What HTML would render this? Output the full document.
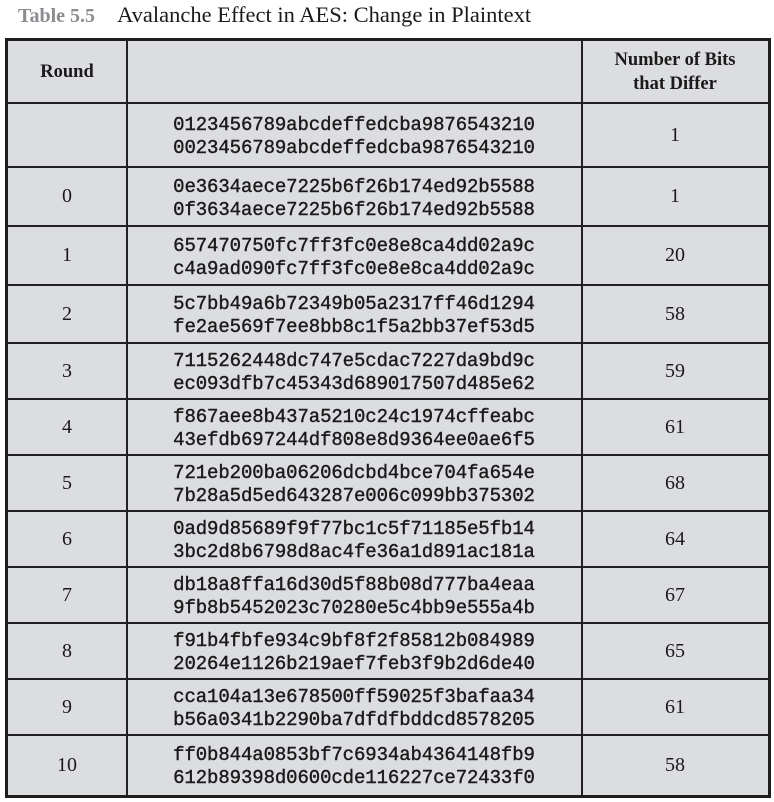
<!DOCTYPE html>
<html><head><style>
body{margin:0;width:774px;height:802px;background:#fff;position:relative;overflow:hidden;font-family:"Liberation Serif",serif;color:#1a1a1a}
.t{position:absolute;top:2px;left:18px;font-size:22.5px;white-space:nowrap}
.t b{color:#8a8c90;margin-right:22px;font-size:20px}
.tbl{position:absolute;left:5px;top:38px;width:760px;height:754px;border:3px solid #1e1e1e;background:#dcdde0}
.h{position:absolute;left:0;width:760px;height:1.5px;background:#222}
.v{position:absolute;top:0;height:754px;width:1.5px;background:#222}
.cell{position:absolute;display:flex;align-items:center;justify-content:center;text-align:center}
.m{font-family:"Liberation Mono",monospace;font-size:19px;line-height:23px;letter-spacing:-0.1px;padding-top:4px;box-sizing:border-box;-webkit-text-stroke:0.4px #1a1a1a}
.n{font-size:20px}
.hd{font-weight:bold;font-size:18.5px;line-height:24px}
</style></head><body>
<div class="t"><b>Table 5.5</b>Avalanche Effect in AES: Change in Plaintext</div>
<div class="tbl" id="T">
<div class="v" style="left:118px"></div>
<div class="v" style="left:573px"></div>
<div class="cell hd" style="left:0;top:0;width:118px;height:62px">Round</div>
<div class="cell hd" style="left:574px;top:0;width:186px;height:62px">Number of Bits<br>that Differ</div>
</div>
<script>
var T=document.getElementById('T');
var b=[62,126,185,244,302,358,414,470,526,582,638,694,754];
var d=[["","0123456789abcdeffedcba9876543210","0023456789abcdeffedcba9876543210","1"],
["0","0e3634aece7225b6f26b174ed92b5588","0f3634aece7225b6f26b174ed92b5588","1"],
["1","657470750fc7ff3fc0e8e8ca4dd02a9c","c4a9ad090fc7ff3fc0e8e8ca4dd02a9c","20"],
["2","5c7bb49a6b72349b05a2317ff46d1294","fe2ae569f7ee8bb8c1f5a2bb37ef53d5","58"],
["3","7115262448dc747e5cdac7227da9bd9c","ec093dfb7c45343d689017507d485e62","59"],
["4","f867aee8b437a5210c24c1974cffeabc","43efdb697244df808e8d9364ee0ae6f5","61"],
["5","721eb200ba06206dcbd4bce704fa654e","7b28a5d5ed643287e006c099bb375302","68"],
["6","0ad9d85689f9f77bc1c5f71185e5fb14","3bc2d8b6798d8ac4fe36a1d891ac181a","64"],
["7","db18a8ffa16d30d5f88b08d777ba4eaa","9fb8b5452023c70280e5c4bb9e555a4b","67"],
["8","f91b4fbfe934c9bf8f2f85812b084989","20264e1126b219aef7feb3f9b2d6de40","65"],
["9","cca104a13e678500ff59025f3bafaa34","b56a0341b2290ba7dfdfbddcd8578205","61"],
["10","ff0b844a0853bf7c6934ab4364148fb9","612b89398d0600cde116227ce72433f0","58"]];
var h='';
for(var i=0;i<d.length;i++){var y=b[i],H=b[i+1]-b[i];
h+='<div class="h" style="top:'+(y-1)+'px"></div>';
h+='<div class="cell n" style="left:0;top:'+y+'px;width:118px;height:'+H+'px">'+d[i][0]+'</div>';
h+='<div class="cell m" style="left:119px;top:'+y+'px;width:454px;height:'+H+'px">'+d[i][1]+'<br>'+d[i][2]+'</div>';
h+='<div class="cell n" style="left:574px;top:'+y+'px;width:186px;height:'+H+'px">'+d[i][3]+'</div>';}
T.insertAdjacentHTML('beforeend',h);
</script>
</body></html>
